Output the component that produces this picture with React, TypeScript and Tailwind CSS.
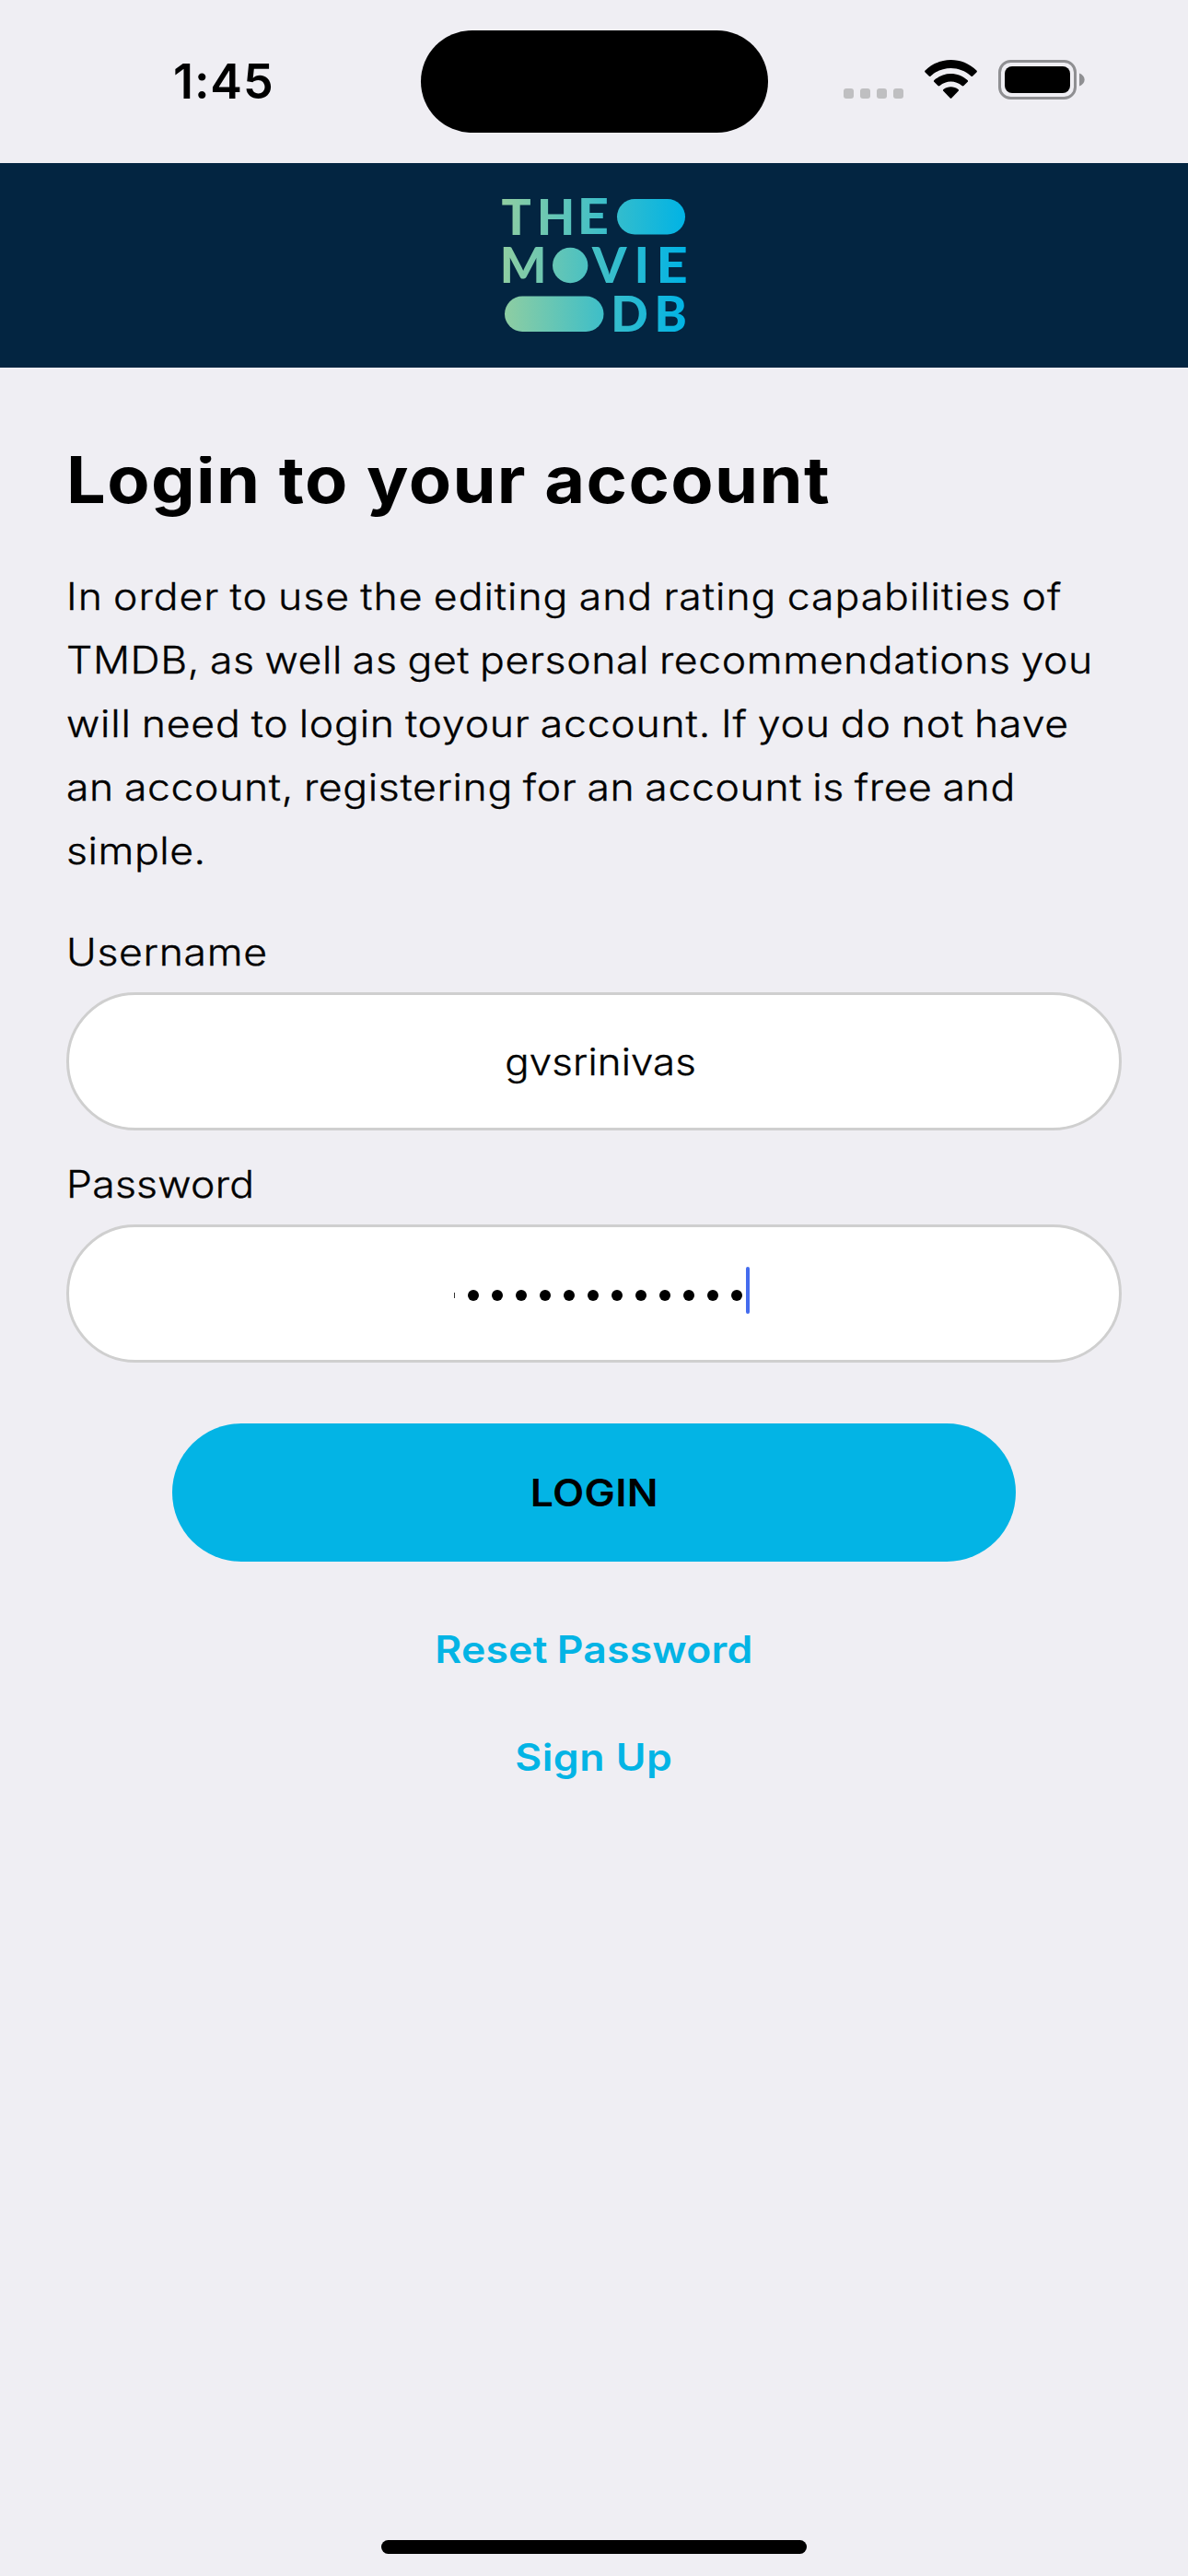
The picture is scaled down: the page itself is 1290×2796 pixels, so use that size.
// Logo letters: glyph, left edge, baseline, whether it is stretched sideways
const letters: [string, number, number, boolean][] = [
  ['T', 544.6, 254.5, false],
  ['H', 583, 254.5, false],
  ['E', 626.8, 254.5, true],
  ['M', 542.8, 307, false],
  ['V', 643, 307, false],
  ['I', 688.8, 307, false],
  ['E', 712.6, 307, true],
  ['D', 663.3, 360, false],
  ['B', 710.6, 360, false],
];
const STRETCH = 1.12;

const stops = (
  <>
    <stop offset="0" stopColor="#90cea1" />
    <stop offset="0.56" stopColor="#3cbec9" />
    <stop offset="1" stopColor="#00b3e5" />
  </>
);

function Logo() {
  return (
    <svg className="h-[164px] w-[218px]" viewBox="536 206 218 164" role="img" aria-label="The Movie DB">
      <defs>
        <linearGradient id="brand" gradientUnits="userSpaceOnUse" x1="545" y1="0" x2="745" y2="0">
          {stops}
        </linearGradient>
        <linearGradient id="brandWide" gradientUnits="userSpaceOnUse" x1={545 / STRETCH} y1="0" x2={745 / STRETCH} y2="0">
          {stops}
        </linearGradient>
      </defs>
      <g fill="url(#brand)">
        <rect x="670" y="216" width="74" height="38.5" rx="19.25" />
        <circle cx="619.2" cy="288" r="19.2" />
        <rect x="548" y="321.5" width="107.5" height="38.5" rx="19.25" />
        {letters.map(([c, x, y, wide]) => (
          <text
            key={c + x}
            x={wide ? x / STRETCH : x}
            y={y}
            transform={wide ? `scale(${STRETCH} 1)` : undefined}
            fill={wide ? 'url(#brandWide)' : 'url(#brand)'}
            className="font-['Lato'] font-black"
            fontSize="53.3"
          >
            {c}
          </text>
        ))}
      </g>
    </svg>
  );
}

function StatusBar() {
  return (
    <div className="flex h-[177px] shrink-0 items-start">
      <div className="ml-[188px] mt-[39px] h-[100px] w-[269px] text-[52px] font-semibold leading-[100px] tracking-[0.9px]">
        1:45
      </div>
      <div className="mt-[33px] h-[111px] w-[377px] rounded-full bg-black" />
      <div className="ml-[82px] mt-[96px] flex gap-[7px]">
        {[0, 1, 2, 3].map((i) => (
          <div key={i} className="size-[11px] rounded-[3px] bg-[#bfbfc1]" />
        ))}
      </div>
      <svg className="ml-[23px] mt-[65px] h-[42px] w-[57px]" viewBox="0 0 57 42">
        <path d="M0.6 13.5 Q-0.4 12.6 0.6 11.5 C16.5 -3.8 40.5 -3.8 56.4 11.5 Q57.4 12.6 56.4 13.5 L52.3 17.6 Q51.4 18.5 50.3 17.5 C38 6 19 6 6.7 17.5 Q5.6 18.5 4.7 17.6 Z" />
        <path d="M10.2 23.8 Q9.5 22.8 10.4 22 C20.6 12.6 36.4 12.6 46.6 22 Q47.5 22.8 46.8 23.8 L42.5 28 Q41.5 28.9 40.5 28 C33.6 22 23.4 22 16.5 28 Q15.5 28.9 14.5 28 Z" />
        <path d="M20.3 33.8 Q19.5 32.9 20.5 32 C25 28.3 32 28.3 36.5 32 Q37.5 32.9 36.7 33.8 L29.5 41.2 Q28.5 42.2 27.5 41.2 Z" />
      </svg>
      <svg className="ml-[23px] mt-[65px] h-[43px] w-[95px]" viewBox="0 0 95 43">
        <rect x="1.5" y="1.5" width="82" height="40" rx="12" fill="none" stroke="#8f8f92" strokeWidth="3" />
        <rect x="7" y="7" width="71" height="29" rx="8" />
        <path d="M88 14.5 C95.5 17 95.5 26 88 28.5 Z" fill="#8f8f92" />
      </svg>
    </div>
  );
}

const paragraph = [
  { text: 'In order to use the editing and rating capabilities of', tracking: 'tracking-[0.876px]' },
  { text: 'TMDB, as well as get personal recommendations you', tracking: 'tracking-[0.54px]' },
  { text: 'will need to login toyour account. If you do not have', tracking: 'tracking-[0.71px]' },
  { text: 'an account, registering for an account is free and', tracking: 'tracking-[0.575px]' },
  { text: 'simple.', tracking: 'tracking-[0.5px]' },
];

export default function App() {
  return (
    <main className="flex h-[2796px] w-[1290px] flex-col overflow-hidden bg-[#efeef3] font-['Inter',sans-serif] text-black">
      <StatusBar />
      <header className="flex h-[222px] shrink-0 items-center justify-center bg-[#032541]">
        <Logo />
      </header>

      <section className="flex flex-col px-[72px] pt-[96px] text-[40.5px] font-light">
        <div className="h-[90px] overflow-hidden">
          <h1 className="-mt-[16px] origin-left scale-x-[1.08] whitespace-nowrap text-[70px] font-bold leading-[84px] tracking-[1.29px]">
            Login to your account
          </h1>
        </div>

        <p className="mt-[28px] leading-[69px] [-webkit-text-stroke:0.35px_black] [word-spacing:-2px]">
          {paragraph.map((l) => (
            <span key={l.text} className={`block w-fit origin-left scale-x-[1.1] whitespace-nowrap ${l.tracking}`}>
              {l.text}
            </span>
          ))}
        </p>

        <label className="mt-[51px] w-fit origin-left scale-x-[1.1] leading-[50px] tracking-[0.6px] [-webkit-text-stroke:0.35px_black]">
          Username
        </label>
        <div className="mt-[18px] flex h-[150px] items-center justify-center rounded-full border-[3px] border-[#cfcfcf] bg-white">
          <span className="ml-[15px] mt-[2px] scale-x-[1.08] tracking-[0.15px] [-webkit-text-stroke:0.35px_black]">gvsrinivas</span>
        </div>

        <label className="mt-[34px] w-fit origin-left scale-x-[1.1] leading-[50px] tracking-[0.2px] [-webkit-text-stroke:0.35px_black]">
          Password
        </label>
        <div className="mt-[18px] flex h-[150px] items-center rounded-full border-[3px] border-[#cfcfcf] bg-white">
          <div className="ml-[418px] mt-[4px] h-[6px] w-px bg-black/80" />
          <div className="ml-[14px] mt-[4px] flex gap-[14px]">
            {Array.from({ length: 12 }, (_, i) => (
              <div key={i} className="size-[12px] rounded-full bg-black" />
            ))}
          </div>
          <div className="-mt-[7px] ml-[4px] h-[51px] w-[4px] rounded-[2px] bg-[#446cee]" />
        </div>

        <button className="mt-[66px] flex h-[150px] w-[916px] items-center justify-center self-center rounded-full bg-[#03b4e5] font-semibold">
          <span className="mt-[2px] scale-x-[1.1] tracking-[0.3px]">LOGIN</span>
        </button>

        <a className="mt-[71px] scale-x-[1.1] self-center font-semibold leading-[50px] tracking-[0.15px] text-[#03b4e5] [word-spacing:-1px]">
          Reset Password
        </a>
        <a className="mt-[67px] scale-x-[1.1] self-center font-semibold leading-[50px] tracking-[0.45px] text-[#03b4e5]">
          Sign Up
        </a>
      </section>

      <div className="mb-[24px] mt-auto h-[15px] w-[462px] shrink-0 self-center rounded-full bg-black" />
    </main>
  );
}
